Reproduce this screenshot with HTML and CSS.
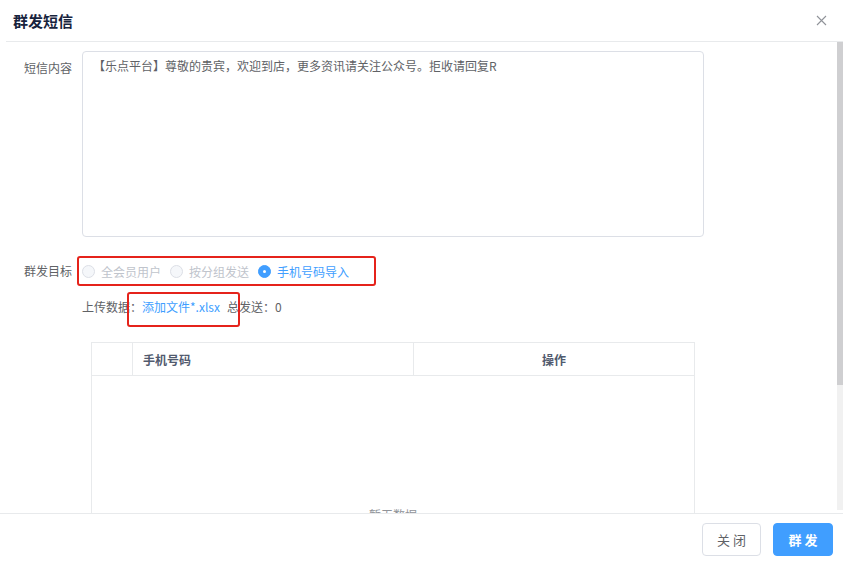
FILE: index.html
```html
<!DOCTYPE html>
<html lang="zh">
<head>
<meta charset="utf-8">
<link rel="stylesheet" href="styles.css">
</head>
<body>
<div class="dialog">
  <div class="dlg-header">
    <span class="dlg-title">群发短信</span>
    <span class="dlg-close">
      <svg width="11" height="11" viewBox="0 0 11 11"><path d="M1 1L10 10M10 1L1 10" stroke="#909399" stroke-width="1.1" fill="none"/></svg>
    </span>
  </div>
  <div class="body-wrap">
    <div class="dlg-body">
      <div class="form-item">
        <label class="form-label label-top">短信内容</label>
        <div class="form-content">
          <div class="textarea">【乐点平台】尊敬的贵宾，欢迎到店，更多资讯请关注公众号。拒收请回复R</div>
        </div>
      </div>
      <div class="form-item row-radio">
        <label class="form-label">群发目标</label>
        <div class="form-content radio-wrap">
          <span class="radio disabled"><span class="dot"></span><span class="rtext">全会员用户</span></span>
          <span class="radio disabled"><span class="dot"></span><span class="rtext">按分组发送</span></span>
          <span class="radio checked"><span class="dot"></span><span class="rtext">手机号码导入</span></span>
          <span class="mark mark-radio"></span>
        </div>
      </div>
      <div class="upload-row">
        <span>上传数据：</span><a class="link">添加文件*.xlsx</a><span class="total">总发送：0</span>
        <span class="mark mark-upload"></span>
      </div>
      <div class="table">
        <div class="thead">
          <div class="th th-sel"></div>
          <div class="th th-phone">手机号码</div>
          <div class="th th-op">操作</div>
        </div>
        <div class="tbody">
          <span class="empty">暂无数据</span>
        </div>
      </div>
    </div>
    <div class="scrollbar"><div class="thumb"></div></div>
  </div>
  <div class="dlg-footer">
    <button class="btn btn-default">关 闭</button>
    <button class="btn btn-primary">群 发</button>
  </div>
</div>
</body>
</html>
```
FILE: styles.css
```css
html, body {
  margin: 0;
  padding: 0;
  background: #fff;
}
body {
  font-family: "Microsoft YaHei", "Noto Sans CJK SC", "Liberation Sans", sans-serif;
  font-size: 12px;
  color: #606266;
}
.dialog {
  width: 855px;
  height: 570px;
  display: flex;
  flex-direction: column;
  background: #fff;
}
.dlg-header {
  height: 41px;
  flex: none;
  display: flex;
  align-items: center;
  justify-content: space-between;
  margin: 0 12px 0 6px;
  padding: 0 16px 0 7px;
  border-bottom: 1px solid #e8eaec;
}
.dlg-title {
  font-size: 15px;
  font-weight: bold;
  color: #17233d;
}
.dlg-close {
  display: flex;
  width: 11px;
  height: 11px;
}
.body-wrap {
  flex: 1;
  min-height: 0;
  display: flex;
  margin: 0 12px 0 6px;
}
.dlg-body {
  flex: 1;
  overflow: hidden;
  padding-top: 9px;
}
.scrollbar {
  width: 6px;
  flex: none;
  background: #f1f1f1;
  margin-bottom: 3px;
  display: flex;
  flex-direction: column;
}
.thumb {
  height: 343px;
  background: #cfcfd1;
}
.form-item {
  display: flex;
  align-items: flex-start;
}
.form-label {
  width: 76px;
  flex: none;
  text-align: right;
  padding-right: 10px;
  box-sizing: border-box;
  line-height: 18px;
}
.label-top {
  padding-top: 8px;
}
.form-content {
  flex: 1;
}
.textarea {
  width: 622px;
  height: 186px;
  box-sizing: border-box;
  border: 1px solid #dcdfe6;
  border-radius: 4px;
  padding: 5px 10px;
  line-height: 18px;
  color: #606266;
}
.row-radio {
  margin-top: 25px;
  align-items: center;
  height: 18px;
}
.radio-wrap {
  display: flex;
  align-items: center;
  position: relative;
  height: 18px;
}
.radio {
  display: inline-flex;
  align-items: center;
  margin-right: 9px;
}
.dot {
  width: 13px;
  height: 13px;
  box-sizing: border-box;
  border-radius: 50%;
  border: 1px solid #dcdfe6;
  background: #f5f7fa;
  margin-right: 6px;
  position: relative;
}
.radio.disabled .rtext {
  color: #c0c4cc;
}
.radio.checked .dot {
  background: #409eff;
  border-color: #409eff;
}
.radio.checked .dot::after {
  content: "";
  position: absolute;
  left: 4px;
  top: 4px;
  width: 3px;
  height: 3px;
  border-radius: 50%;
  background: #fff;
}
.radio.checked .rtext {
  color: #409eff;
}
.mark {
  position: absolute;
  border: 2px solid #e5231b;
  border-radius: 3px;
  box-sizing: border-box;
  pointer-events: none;
}
.mark-radio {
  left: -5px;
  top: -6px;
  width: 299px;
  height: 30px;
}
.upload-row {
  position: relative;
  margin-top: 18px;
  margin-left: 76px;
  line-height: 18px;
  color: #606266;
}
.link {
  color: #409eff;
  margin-right: 7px;
}
.mark-upload {
  left: 45px;
  top: -6px;
  width: 113px;
  height: 35px;
}
.table {
  margin: 26px 0 20px 85px;
  width: 604px;
  border: 1px solid #e8eaec;
  box-sizing: border-box;
}
.thead {
  display: flex;
  height: 33px;
  border-bottom: 1px solid #e8eaec;
  box-sizing: border-box;
}
.th {
  display: flex;
  align-items: center;
  font-weight: bold;
  color: #515a6e;
  box-sizing: border-box;
}
.th-sel {
  width: 41px;
  border-right: 1px solid #e8eaec;
}
.th-phone {
  width: 281px;
  padding-left: 10px;
  border-right: 1px solid #e8eaec;
}
.th-op {
  flex: 1;
  justify-content: center;
}
.tbody {
  height: 276px;
  display: flex;
  align-items: center;
  justify-content: center;
}
.empty {
  color: #909399;
}
.dlg-footer {
  flex: none;
  height: 57px;
  border-top: 1px solid #e8eaec;
  margin: 0 12px 0 0;
  display: flex;
  justify-content: flex-end;
  align-items: flex-start;
  padding-top: 9px;
  padding-right: 10px;
  box-sizing: border-box;
  gap: 12px;
}
.btn {
  height: 33px;
  width: 60px;
  border-radius: 4px;
  font-family: inherit;
  font-size: 13px;
  cursor: pointer;
  padding: 0;
}
.btn-default {
  background: #fff;
  border: 1px solid #dcdfe6;
  color: #606266;
  width: 59px;
}
.btn-primary {
  background: #409eff;
  border: 1px solid #409eff;
  color: #fff;
  font-weight: bold;
}
```
